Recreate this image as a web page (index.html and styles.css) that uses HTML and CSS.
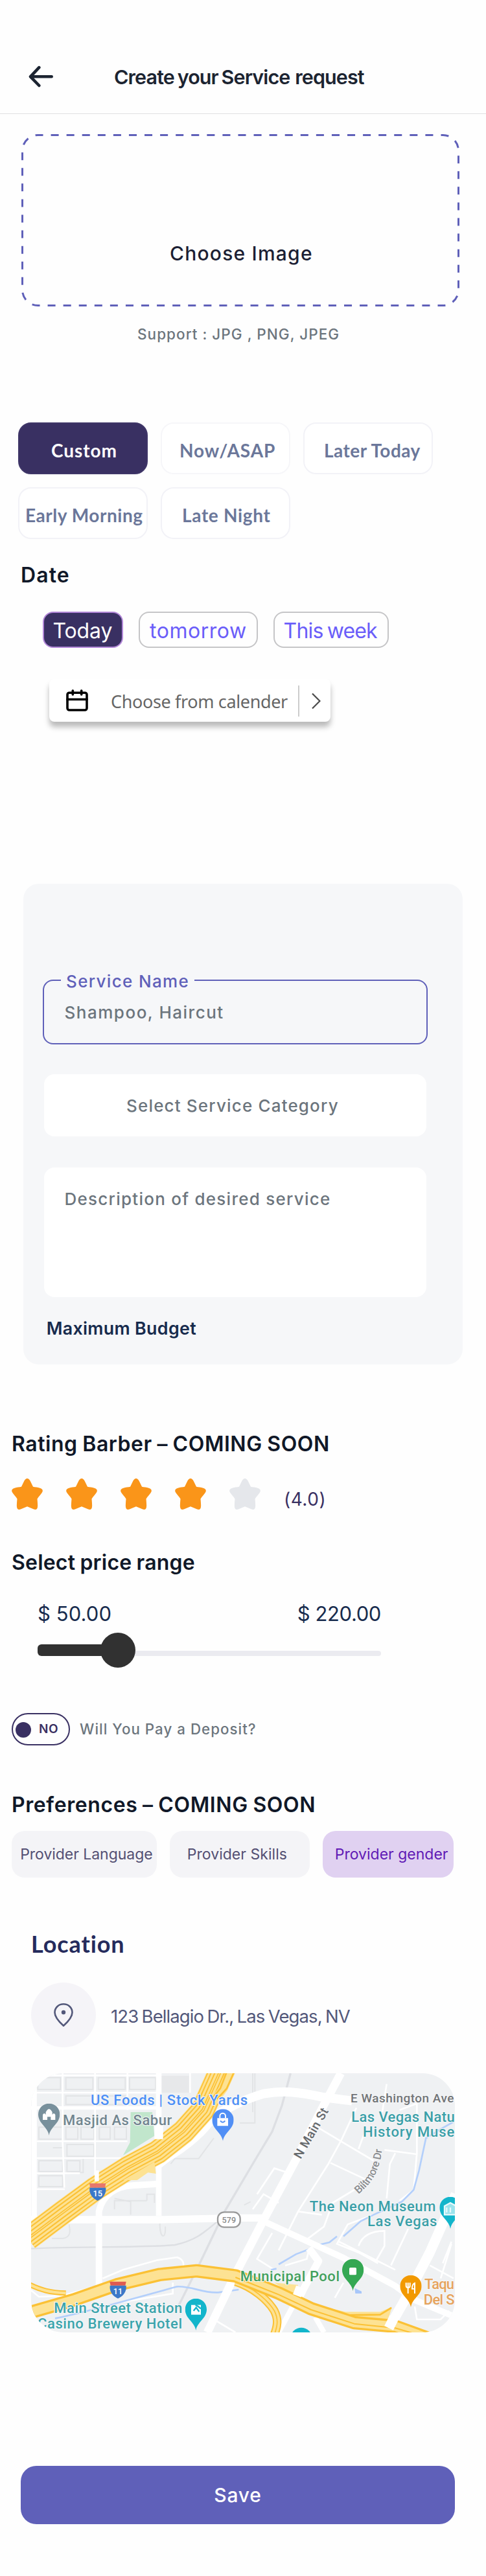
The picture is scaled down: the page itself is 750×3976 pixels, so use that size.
FILE: index.html
```html
<!DOCTYPE html>
<html lang="en">
<head>
<meta charset="utf-8">
<title>Create your Service request</title>
<link rel="stylesheet" href="styles.css">
</head>
<body>
<svg class="defs" width="0" height="0" aria-hidden="true">
  <symbol id="star" viewBox="0 0 48 48"><path d="M24 0c2 0 3.6 1.6 5 4.5l4 8.3c3 .6 7.5 1 10.5 2 4.5 1.3 5.5 4 3 7.500-2 3-5 6-7 9.200.2 3.700.8 7.500.6 11.500-.2 4.500-2.500 6-6.500 4.300L24 43.200l-9.600 4.100c-4 1.700-6.300.2-6.500-4.300-.2-4 .4-7.800.6-11.500-2-3.200-5-6.200-7-9.200-2.500-3.500-1.500-6.200 3-7.500 3-1 7.500-1.400 10.500-2l4-8.300C20.400 1.600 22 0 24 0z"/></symbol>
  <symbol id="pin" viewBox="-50 -50 100 150"><path d="M0 98C-6 58-50 44-50 0A50 50 0 0 1 50 0C50 44 6 58 0 98Z"/></symbol>
</svg>
<main class="page">
  <header class="header">
    <svg class="back" viewBox="0 0 40 40" width="40" height="40"><path d="M35.700 19.300H3M16.300 5.200 3 19.300 16.300 33"/></svg>
    <h1 class="title">Create your Service <span class="title-end">request</span></h1>
  </header>

  <section class="upload">
    <svg class="upload-border" width="676" height="266"><rect x="1.500" y="1.500" width="673" height="263" rx="24" pathLength="1824"/></svg>
    <span class="upload-label">Choose Image</span>
  </section>
  <p class="support">Support : JPG , PNG, JPEG</p>

  <div class="times">
    <button class="time time-custom">Custom</button>
    <button class="time time-now">Now/ASAP</button>
    <button class="time time-later">Later Today</button>
    <button class="time time-early">Early Morning</button>
    <button class="time time-night">Late Night</button>
  </div>

  <h2 class="heading heading-date">Date</h2>
  <div class="days">
    <button class="day day-today">Today</button>
    <button class="day day-tomorrow">tomorrow</button>
    <button class="day day-week">This week</button>
  </div>

  <div class="calendar">
    <svg class="calendar-icon" viewBox="0 0 34 34" width="34" height="34"><rect x="2" y="5.200" width="30" height="26.800" rx="3"/><path d="M2 15.500h30M10.300 2v6M23.700 2v6"/></svg>
    <span class="calendar-text">Choose from calender</span>
    <span class="calendar-divider"></span>
    <svg class="calendar-arrow" viewBox="0 0 14 26" width="14" height="26"><path d="M1 1.500 12.500 13 1 24.500"/></svg>
  </div>

  <section class="form">
    <div class="field"><span class="field-label">Service Name</span><span class="field-value">Shampoo, Haircut</span></div>
    <div class="select">Select Service Category</div>
    <div class="area">Description of desired service</div>
    <h3 class="budget">Maximum Budget</h3>
  </section>

  <h2 class="heading heading-rating">Rating Barber – COMING SOON</h2>
  <div class="rating">
    <svg class="star"><use href="#star"/></svg>
    <svg class="star"><use href="#star"/></svg>
    <svg class="star"><use href="#star"/></svg>
    <svg class="star"><use href="#star"/></svg>
    <svg class="star star-off"><use href="#star"/></svg>
    <span class="score">(4.0)</span>
  </div>

  <h2 class="heading heading-price">Select price range</h2>
  <div class="prices"><span class="price-min">$ 50.00</span><span class="price-max">$ 220.00</span></div>
  <div class="slider"><span class="slider-fill"></span><span class="slider-knob"></span><span class="slider-rest"></span></div>

  <div class="deposit">
    <span class="toggle"><span class="toggle-dot"></span><span class="toggle-text">NO</span></span>
    <span class="deposit-text">Will You Pay a Deposit?</span>
  </div>

  <h2 class="heading heading-prefs">Preferences – COMING SOON</h2>
  <div class="prefs">
    <button class="pref pref-language">Provider Language</button>
    <button class="pref pref-skills">Provider Skills</button>
    <button class="pref pref-gender">Provider gender</button>
  </div>

  <h2 class="location">Location</h2>
  <div class="address">
    <span class="address-icon"><svg viewBox="0 0 30 36" width="30" height="36"><path d="M15 1.300C7.500 1.300 1.500 6.800 1.500 14.300 1.500 21.500 8 28.500 15 34.800 22 28.500 28.500 21.500 28.500 14.300 28.500 6.800 22.500 1.300 15 1.300Z"/><circle cx="15" cy="14" r="3.200"/></svg></span>
    <span class="address-text">123 Bellagio Dr., Las Vegas, NV</span>
  </div>

  <svg class="map" viewBox="54 60 1962 1200" width="654" height="400">
    <rect x="54" y="60" width="1962" height="1200" fill="#eff1f3"/>
    <path d="M655 72H785V150H655Z" fill="#e7e8ea"/>
    <path d="M515 240H615L625 350 480 440 512 380Z" fill="#c1e6cc"/>
    <g class="blocks">
      <path d="M85 80H190V135H85ZM215 80H340V135H215ZM365 80H490V135H365ZM510 80H630V135H510ZM215 165H340V205H215ZM365 165H490V205H365ZM90 310H200V365H90ZM215 310H270V365H215ZM285 310H345V365H285ZM370 310H420V365H370ZM440 310H495V365H440ZM90 465H200V515H90ZM220 465H280V515H220ZM90 535H200V585H90ZM220 390H345V445H220ZM295 455V520H240M155 405H200"/>
      <path d="M440 690V650H590M590 650V620H625V660M515 715V655L440 640M650 755C650 830 680 830 675 770M150 825H200C240 820 235 790 230 760M700 480 720 455H830L900 360M1080 240V60M1020 290H1090V60M1040 670 1070 655"/>
    </g>
    <g class="rail">
      <path d="M1255 60 1215 210 1170 330 1080 480 950 700 830 950 730 1150"/>
      <path d="M54 872C200 862 600 868 720 855 830 830 860 790 925 740" stroke-width="7"/>
    </g>
    <g class="lanes">
      <path d="M54 150H640M80 375H500M80 453H470M80 523H280M80 597H210M200 60V380L208 590M350 60V550M500 60V230M790 60V150M54 70H640"/>
      <path d="M385 1010 480 970 640 925 730 912C770 925 765 960 740 990M54 1065 90 1095 200 1090 380 1040M710 1030V1080L470 1120M900 1200 1000 1260"/>
      <path d="M1380 310 1480 370 1640 465M1440 475 1600 550M1560 220 1490 370 1430 480 1290 700 1200 880M1600 330 1570 410M1690 415 1840 435M1840 200V430L1825 600 1760 650M1740 430 1715 480 1700 640M1550 600 1450 660 1410 770 1330 830M1290 700 1400 715M1640 715 1520 760 1470 850 1570 890 1660 940M1570 860C1590 800 1650 790 1690 790V860L1650 930M1800 780 1720 950M1480 840 1740 970M1100 620 1180 500 1240 520M1080 690 1130 620 1200 660M1170 800 1100 920 1180 970M1340 880 1330 920 1230 950M1900 950 2010 1010M2000 850 1950 1010M1830 1140 1840 1200H1950L1990 1160M1500 1030 1460 1100M2000 840 1960 940M1700 110 1680 240M1840 200 1760 230"/>
    </g>
    <g class="river">
      <path d="M2010 285 1965 310 1882 360 1850 510 1825 600 1770 655 1640 715 1580 745 1500 815M1470 815 1435 843 1385 855M1340 875 1280 898 1200 945M1190 965 1165 970M165 1195C300 1170 500 1110 730 1048 800 1045 850 1080 920 1075L1015 1062"/>
    </g>
    <g class="roads">
      <path d="M68 60V740" stroke-width="25"/>
      <path d="M54 221H650" stroke-width="16"/>
      <path d="M645 60V720" stroke-width="26"/>
      <path d="M54 738H650L1020 730H1130" stroke-width="34"/>
      <path d="M368 1045V700C385 620 450 585 520 580L645 572" stroke-width="30"/>
      <path d="M645 480 690 445C770 400 850 330 890 270 960 220 1030 185 1130 155 1220 140 1290 145 1400 170L1540 188" stroke-width="42"/>
      <path d="M1488 60 1400 225 1280 460 1130 740 1000 990 870 1260" stroke-width="38"/>
      <path d="M1130 745 1380 860 1500 915 1740 1045 1830 1110 2020 1190" stroke-width="29"/>
      <path d="M2020 620 1900 890 1790 1100 1710 1240" stroke-width="46"/>
      <path d="M1340 870 1385 930 1320 1050 1290 1110" stroke-width="34"/>
      <path d="M1265 1140 1200 1260M1370 1190 1410 1260" stroke-width="24"/>
    </g>
    <g class="highway">
      <path class="hw" stroke-width="112" d="M40 825 200 705 350 595 500 500 640 425 760 330 850 230 935 40"/>
      <path class="hw-line" stroke-width="106" d="M40 825 200 705 350 595 500 500 640 425 760 330 850 230 935 40"/>
      <path class="hw" stroke-width="96" d="M40 825 200 705 350 595 500 500 640 425 760 330 850 230 935 40"/>
      <path class="hw-line" stroke-width="78" d="M40 825 200 705 350 595 500 500 640 425 760 330 850 230 935 40"/>
      <path class="hw" stroke-width="66" d="M40 825 200 705 350 595 500 500 640 425 760 330 850 230 935 40"/>
      <path class="hw-line" stroke-width="46" d="M40 825 200 705 350 595 500 500 640 425 760 330 850 230 935 40"/>
      <path class="hw" stroke-width="34" d="M40 825 200 705 350 595 500 500 640 425 760 330 850 230 935 40"/>
      <path class="hw-line" stroke-width="14" d="M40 825 200 705 350 595 500 500 640 425 760 330 850 230 935 40"/>
      <path class="hw" stroke-width="4" d="M40 825 200 705 350 595 500 500 640 425 760 330 850 230 935 40"/>
      <path class="hw" stroke-width="40" d="M900 190 945 130 985 40"/>
      <path class="hw-line" stroke-width="8" d="M890 180 930 130 965 40M915 180 960 130 1000 40"/>
      <path d="M480 555 625 470 632 525 595 520 545 555Z" fill="#fde293"/>
      <path class="hw-line" stroke-width="24" d="M40 1035C100 1065 140 1075 215 1078"/>
      <path class="hw" stroke-width="12" d="M40 1035C100 1065 140 1075 215 1078"/>
      <path class="hw-line" stroke-width="40" d="M1000 1025C1080 1050 1150 1110 1180 1160 1200 1200 1195 1230 1180 1270"/>
      <path class="hw" stroke-width="28" d="M1000 1025C1080 1050 1150 1110 1180 1160 1200 1200 1195 1230 1180 1270"/>
      <path class="hw-line" stroke-width="5" d="M1000 1025C1080 1050 1150 1110 1180 1160 1200 1200 1195 1230 1180 1270"/>
      <path d="M1180 1030 1290 1040 1275 1085 1400 1140 1510 1165 1670 1165 1725 1142 1705 1205 1560 1205 1400 1170Z" fill="#fde293"/>
      <path class="hw-line" stroke-width="8" d="M1260 1078 1400 1145 1520 1180 1670 1178 1722 1146M1700 1203H1560"/>
      <path class="hw-line" stroke-width="62" d="M40 1170 250 1110 450 1040 650 992 820 975 1000 998 1200 1078 1350 1150 1550 1215 1740 1232 1900 1290"/>
      <path class="hw" stroke-width="42" d="M40 1170 250 1110 450 1040 650 992 820 975 1000 998 1200 1078 1350 1150 1550 1215 1740 1232 1900 1290"/>
      <path class="hw-line" stroke-width="6" d="M1000 1005 1200 1085 1350 1155 1550 1220 1740 1240 1860 1275"/>
    </g>
    <g class="roads">
      <path d="M358 510V560" stroke-width="20"/>
      <path d="M645 300V365" stroke-width="40"/>
      <path d="M1735 1190 1710 1240" stroke-width="46"/>
      <path d="M1300 1050 1285 1090" stroke-width="40"/>
    </g>
    <g>
      <path d="M324 570H400L396 590H328Z" fill="#e8776b"/><path d="M325 590H400C404 618 385 640 362 650 339 640 321 618 325 590Z" fill="#3c78c8"/>
      <text class="shield" x="362" y="631">15</text>
      <path d="M418 1025H494L490 1043H422Z" fill="#e05a50"/><path d="M419 1043H494C498 1071 479 1093 456 1103 433 1093 415 1071 419 1043Z" fill="#3c78c8"/>
      <text class="shield" x="456" y="1084">11</text>
      <rect x="918" y="703" width="104" height="70" rx="30" fill="#fff" stroke="#999" stroke-width="7"/>
      <text class="route" x="970" y="752">579</text>
    </g>
    <g>
      <use href="#pin" x="87" y="200" width="100" height="150" fill="#78909c"/>
      <path d="M108 276V252Q115 240 122 252V240Q137 212 152 240V252Q159 240 166 252V276H145V262H129V276Z" fill="#fff"/>
      <use href="#pin" x="892" y="226" width="100" height="150" fill="#518ff5"/>
      <path d="M916 268H966V304H916Z" fill="#fff"/><path d="M928 268V258A13 13 0 0 1 954 258V268" fill="none" stroke="#fff" stroke-width="6"/><path d="M930 280Q941 294 952 280" fill="none" stroke="#518ff5" stroke-width="6"/>
      <use href="#pin" x="767" y="1103" width="100" height="150" fill="#12b5cb"/>
      <path d="M795 1133H840V1178H795Z" fill="#fff"/><path d="M806 1160 818 1145 832 1164M815 1133Q830 1140 840 1150" fill="none" stroke="#12b5cb" stroke-width="7"/>
      <use href="#pin" x="1945" y="632" width="100" height="150" fill="#12b5cb"/>
      <path d="M1968 675 1995 660 2022 675V715H1968ZM1978 682V705M1995 682V705" fill="#9be3ec" stroke="#e7f9fb" stroke-width="7"/>
      <use href="#pin" x="1494" y="920" width="100" height="150" fill="#34a853"/>
      <rect x="1527" y="960" width="33" height="34" rx="5" fill="#fff"/>
      <path d="M1552 1055 1584 1070V1080H1555Z" fill="#a8c7fa"/>
      <use href="#pin" x="1762" y="995" width="100" height="150" fill="#f29900"/>
      <path d="M1790 1030V1045Q1790 1053 1799 1053T1808 1045V1030M1799 1030V1080M1830 1080V1032Q1818 1036 1818 1058H1830" fill="none" stroke="#fff" stroke-width="6"/>
      <circle cx="1305" cy="1288" r="50" fill="#12b5cb"/>
    </g>
    <g class="labels">
      <text x="330" y="207" fill="#4d8ff6" textLength="726">US Foods | Stock Yards</text>
      <text x="201" y="299" fill="#71858f" textLength="505">Masjid As Sabur</text>
      <text x="160" y="1170" fill="#3ba4ac" textLength="594">Main Street Station</text>
      <text x="84" y="1241" fill="#3ba4ac" textLength="669">Casino Brewery Hotel</text>
      <text x="1533" y="196" fill="#717477" font-size="57" textLength="478">E Washington Ave</text>
      <text x="1537" y="284" fill="#3a9fa8" textLength="478">Las Vegas Natu</text>
      <text x="1590" y="355" fill="#3a9fa8" textLength="424">History Muse</text>
      <text x="1343" y="698" fill="#3a9fa8" textLength="584">The Neon Museum</text>
      <text x="1611" y="769" fill="#3a9fa8" textLength="322">Las Vegas</text>
      <text x="1022" y="1023" fill="#42a05d" textLength="460">Municipal Pool</text>
      <text x="1875" y="1059" fill="#e6a35c" textLength="138">Taqu</text>
      <text x="1871" y="1130" fill="#e6a35c" textLength="144">Del S</text>
      <text transform="translate(1302 460) rotate(-60)" fill="#66696c" font-size="57" textLength="260">N Main St</text>
      <path id="dr" d="M1570 620C1640 560 1672 510 1684 370" fill="none" stroke="none"/>
      <text fill="#8a8c8f" font-size="50"><textPath href="#dr" textLength="240">Biltmore Dr</textPath></text>
    </g>
  </svg>

  <button class="save">Save</button>
</main>
</body>
</html>
```
FILE: styles.css
```css
* { box-sizing: border-box; }
body { margin: 0; background: #fff; font-family: Inter, "Liberation Sans", sans-serif; line-height: 40px; white-space: nowrap; }
h1, h2, h3, p { margin: 0; }
button { margin: 0; padding: 0; border: 0; background: none; font: inherit; line-height: 40px; text-align: left; display: flex; align-items: flex-start; white-space: nowrap; }
.defs { position: absolute; }
.page { width: 750px; height: 3976px; display: flex; flex-direction: column; align-items: flex-start; background: #fefefe; overflow: hidden; }

.header { width: 750px; height: 176px; padding: 99px 0 0 44px; display: flex; align-items: flex-start; gap: 92px; border-bottom: 1px solid #dfe0e2; }
.back { fill: none; stroke: #1c2431; stroke-width: 4.6; stroke-linecap: round; stroke-linejoin: round; }
.title { font-size: 30.5px; font-weight: 600; letter-spacing: -.9px; word-spacing: -2px; color: #1c2431; }
.title-end { margin-left: 3px; }

.upload { position: relative; width: 676px; height: 266px; margin: 31px 0 0 33px; padding: 164px 0 0 229px; }
.upload-border { position: absolute; left: 0; top: 0; }
.upload-border rect { fill: none; stroke: #5f60b9; stroke-width: 3; stroke-dasharray: 12 12; stroke-dashoffset: 4; }
.upload-label { font-size: 30px; font-weight: 500; letter-spacing: 1.22px; color: #1c1f34; }
.support { margin: 23px 0 0 212px; font-size: 22.5px; font-weight: 500; letter-spacing: 1.03px; color: #6c757d; }

.times { margin: 116px 0 0 28px; display: grid; grid-template-columns: repeat(3, 200px); grid-auto-rows: 80px; gap: 20px; }
.time { padding-top: 21px; border: 2px solid #f2f2f7; border-radius: 20px; background: #fff; font-family: Lato, sans-serif; font-size: 28px; font-weight: 700; letter-spacing: .6px; color: #6b779a; }
.time-custom { padding-left: 49px; background: #393062; border-color: #3f3668; color: #fff; letter-spacing: .94px; }
.time-now { padding-left: 27px; letter-spacing: .87px; border-color: #f6f6f9; }
.time-later { padding-left: 30px; letter-spacing: .47px; }
.time-early { padding-left: 9px; letter-spacing: .54px; }
.time-night { padding-left: 31px; letter-spacing: .67px; }

.heading { font-size: 32px; font-weight: 600; color: #101828; }
.heading-date { margin: 36px 0 0 32px; letter-spacing: 1.1px; }
.days { margin: 36px 0 0 66px; display: flex; gap: 24px; }
.day { height: 56px; padding-top: 8px; border: 2px solid #c5c5c7; border-radius: 16px; font-size: 32px; color: #6a5df9; }
.day-today { width: 124px; padding-left: 13.5px; background: #393062; border-color: #b287d8; color: #fff; letter-spacing: -.11px; }
.day-tomorrow { width: 184px; padding-left: 15px; letter-spacing: .54px; }
.day-week { width: 178px; padding-left: 13.6px; letter-spacing: -.83px; word-spacing: -2px; }

.calendar { width: 434px; height: 66px; margin: 48px 0 0 76px; display: flex; align-items: flex-start; background: #fff; border-radius: 8px; box-shadow: 0 8px 8px rgba(0, 0, 0, .27); clip-path: inset(0 -12px -24px -12px); }
.calendar-icon { margin: 16px 0 0 26px; fill: none; stroke: #000; stroke-width: 3.6; stroke-linecap: round; }
.calendar-text { width: 289px; margin: 15px 0 0 35px; font-family: "Noto Sans", sans-serif; font-size: 27px; letter-spacing: -.36px; color: #666; }
.calendar-divider { width: 2px; height: 48px; margin-top: 10px; background: #ccc; }
.calendar-arrow { margin: 21px 0 0 19px; fill: none; stroke: #4a4a4a; stroke-width: 2.2; }

.form { width: 678px; height: 742px; margin: 250px 0 0 36px; padding: 148px 0 0 30px; border-radius: 24px; background: #f6f7f9; font-size: 26px; font-weight: 500; color: #6c757d; }
.field { position: relative; width: 594px; height: 100px; padding: 28.6px 0 0 31.5px; border: 2px solid #5f60b9; border-radius: 16px; }
.field-label { position: absolute; left: 26px; top: -19px; width: 206px; padding-left: 8px; background: #f6f7f9; letter-spacing: 1.34px; color: #5f60b9; }
.field-value { display: block; letter-spacing: 1.51px; }
.select { width: 590px; height: 96px; margin: 46px 0 0 2px; padding: 29px 0 0 127px; border-radius: 16px; background: #fff; letter-spacing: 1.17px; }
.area { width: 590px; height: 200px; margin: 48px 0 0 2px; padding: 29px 0 0 31.5px; border-radius: 16px; background: #fff; letter-spacing: 1.25px; }
.budget { margin: 28px 0 0 5.7px; font-size: 26.8px; font-weight: 600; letter-spacing: .33px; color: #172b4d; }

.heading-rating { margin: 103px 0 0 18px; letter-spacing: .55px; word-spacing: -1px; }
.rating { height: 48px; margin: 33px 0 0 18px; display: flex; align-items: flex-start; gap: 36px; }
.star { width: 48px; height: 48px; fill: #fa9519; }
.star-off { fill: #e5e7eb; }
.score { margin-top: 12px; font-size: 28px; letter-spacing: .5px; color: #393062; }

.heading-price { margin: 62px 0 0 18px; letter-spacing: .2px; word-spacing: -1px; }
.prices { width: 530px; margin: 39px 0 0 58px; display: flex; justify-content: space-between; font-size: 31px; color: #172b4d; }
.price-min { letter-spacing: .1px; }
.price-max { letter-spacing: -.41px; }
.slider { width: 530px; height: 54px; margin: 9px 0 0 58px; display: flex; align-items: flex-start; }
.slider-fill { width: 105px; height: 18px; margin-top: 18px; border-radius: 6px 0 0 6px; background: #313131; }
.slider-knob { position: relative; z-index: 1; width: 54px; height: 54px; margin-left: -8px; border-radius: 50%; background: #313131; }
.slider-rest { flex: 1; height: 8px; margin: 28px 0 0 -12px; border-radius: 0 4px 4px 0; background: #ebebf0; }

.deposit { margin: 70px 0 0 18px; display: flex; align-items: flex-start; }
.toggle { width: 90px; height: 50px; display: flex; align-items: flex-start; border: 2px solid #393062; border-radius: 25px; }
.toggle-dot { width: 24px; height: 24px; margin: 12px 0 0 4px; border-radius: 50%; background: #393062; }
.toggle-text { margin: 3px 0 0 12px; font-size: 19px; font-weight: 600; letter-spacing: .6px; color: #393062; }
.deposit-text { margin: 5px 0 0 15px; font-size: 22.3px; font-weight: 500; letter-spacing: 1.03px; color: #6c757d; }

.heading-prefs { margin: 72px 0 0 18px; letter-spacing: .6px; word-spacing: -1px; }
.prefs { margin: 20px 0 0 18px; display: flex; gap: 20px; }
.pref { height: 72px; padding-top: 16px; border-radius: 20px; background: #f4f4f7; font-size: 23px; color: #534f73; }
.pref-language { width: 224px; padding-left: 13.2px; letter-spacing: -.04px; }
.pref-skills { width: 216px; padding-left: 26.8px; letter-spacing: .03px; }
.pref-gender { width: 202px; padding-left: 18.8px; background: #e0d1f1; color: #6019b5; }

.location { margin: 82px 0 0 48px; font-family: Lato, sans-serif; font-size: 36px; font-weight: 700; letter-spacing: .9px; color: #252b5c; }
.address { margin: 40px 0 0 48px; display: flex; align-items: center; gap: 23px; }
.address-icon { width: 100px; height: 100px; display: flex; align-items: center; justify-content: center; border-radius: 50%; background: #f5f4f8; }
.address-icon path { fill: none; stroke: #53587a; stroke-width: 2.6; }
.address-icon circle { fill: #53587a; }
.address-text { padding-top: 3px; font-size: 27.5px; letter-spacing: -.9px; word-spacing: -1.5px; color: #53587a; }

.map { display: block; margin: 40px 0 0 48px; border-radius: 50px; font-family: Roboto, sans-serif; }
.blocks { fill: none; stroke: #e2e4e6; stroke-width: 6; }
.rail { fill: none; stroke: #dddfe3; stroke-width: 10; }
.lanes { fill: none; stroke: #fff; stroke-width: 8; }
.river { fill: none; stroke: #b3cffb; stroke-width: 8; }
.roads { fill: none; stroke: #fff; stroke-linejoin: round; }
.hw { fill: none; stroke: #fde293; stroke-linejoin: round; }
.hw-line { fill: none; stroke: #fbc135; stroke-linejoin: round; }
.labels { font-size: 66px; font-weight: 500; stroke: #f7f8f9; stroke-width: 6px; paint-order: stroke; stroke-linejoin: round; }
.shield { font-size: 38px; font-weight: 500; fill: #fff; text-anchor: middle; }
.route { font-size: 38px; font-weight: 500; fill: #8c8c8c; text-anchor: middle; }

.save { width: 670px; height: 90px; margin: 206px 0 0 32px; justify-content: center; align-items: center; border-radius: 24px; background: #5f60b9; font-size: 30px; font-weight: 500; letter-spacing: .85px; color: #fff; }
```
